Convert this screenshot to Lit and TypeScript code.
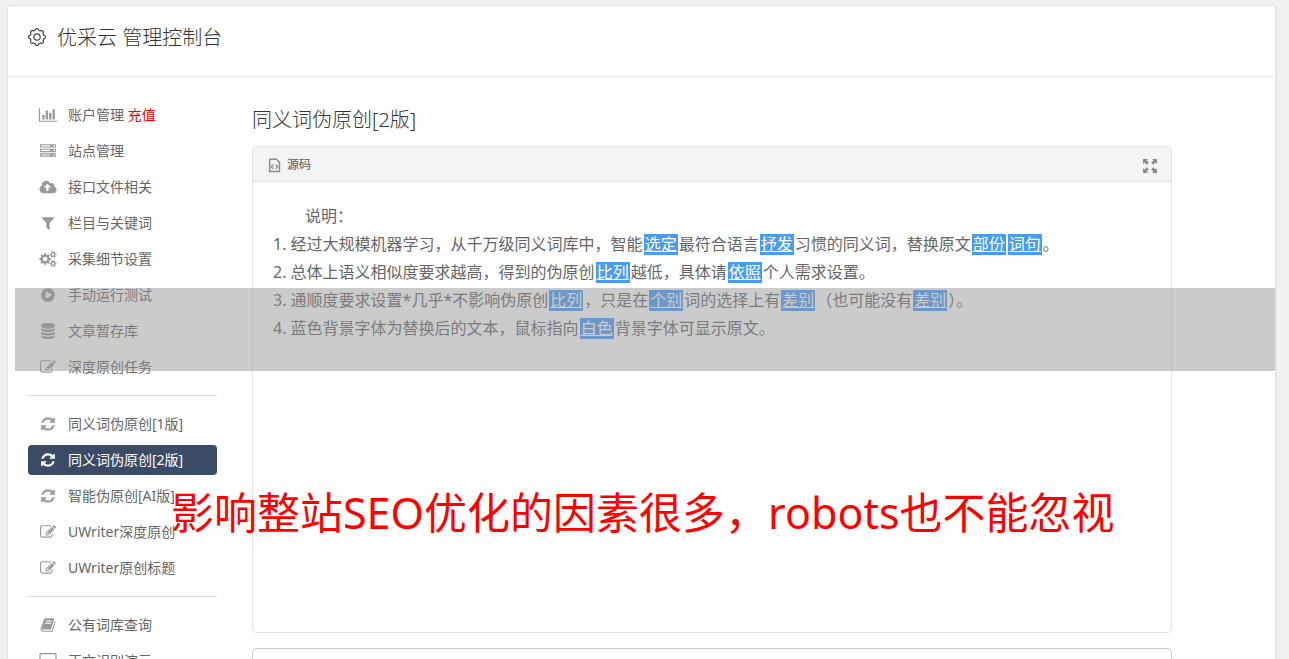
import { LitElement, html, css, svg, nothing } from "lit";
import { customElement, property } from "lit/decorators.js";
import { classMap } from "lit/directives/class-map.js";

interface Glyph {
  w: number;
  d: string;
}

const GLYPHS: Record<string, Glyph> = {
  chart: {
    w: 2048,
    d: "M640 896v512h-256v-512h256zm384-512v1024h-256v-1024h256zm1024 1152v128h-2048v-1536h128v1408h1920zm-640-896v768h-256v-768h256zm384-384v1152h-256v-1152h256z",
  },
  server: {
    w: 1792,
    d: "M128 1408h1024v-128h-1024v128zm0-512h1024v-128h-1024v128zm1568 448q0-40-28-68t-68-28-68 28-28 68 28 68 68 28 68-28 28-68zm-1568-960h1024v-128h-1024v128zm1568 448q0-40-28-68t-68-28-68 28-28 68 28 68 68 28 68-28 28-68zm0-512q0-40-28-68t-68-28-68 28-28 68 28 68 68 28 68-28 28-68zm96 832v384h-1792v-384h1792zm0-512v384h-1792v-384h1792zm0-512v384h-1792v-384h1792z",
  },
  upload: {
    w: 1920,
    d: "M1280 928q0-14-9-23l-352-352q-9-9-23-9t-23 9l-351 351q-10 12-10 24 0 14 9 23t23 9h224v352q0 13 9.5 22.5t22.5 9.5h192q13 0 22.5-9.5t9.5-22.5v-352h224q13 0 22.5-9.5t9.5-22.5zm640 288q0 159-112.5 271.5t-271.5 112.5h-1088q-185 0-316.5-131.5t-131.5-316.5q0-130 70-240t188-165q-2-30-2-43 0-212 150-362t362-150q156 0 285.5 87t188.5 231q71-62 166-62 106 0 181 75t75 181q0 76-41 138 130 31 213.5 135.5t83.5 238.5z",
  },
  filter: {
    w: 1792,
    d: "M1595 295q17 41-14 70l-493 493v742q0 42-39 59-13 5-25 5-27 0-45-19l-256-256q-19-19-19-45v-486l-493-493q-31-29-14-70 17-39 59-39h1280q42 0 59 39z",
  },
  cogs: {
    w: 1920,
    d: "M896 896q0-106-75-181t-181-75-181 75-75 181 75 181 181 75 181-75 75-181zm768 512q0-52-38-90t-90-38-90 38-38 90q0 53 37.5 90.5t90.5 37.5 90.5-37.5 37.5-90.5zm0-1024q0-52-38-90t-90-38-90 38-38 90q0 53 37.5 90.5t90.5 37.5 90.5-37.5 37.5-90.5zm-384 421v185q0 10-7 19.5t-16 10.5l-155 24q-11 35-32 76 34 48 90 115 7 11 7 20 0 12-7 19-23 30-82.5 89.5t-78.5 59.5q-11 0-21-7l-115-90q-37 19-77 31-11 108-23 155-7 24-30 24h-186q-11 0-20-7.5t-10-17.5l-23-153q-34-10-75-31l-118 89q-7 7-20 7-11 0-21-8-144-133-144-160 0-9 7-19 10-14 41-53t47-61q-23-44-35-82l-152-24q-10-1-17-9.5t-7-19.5v-185q0-10 7-19.5t16-10.5l155-24q11-35 32-76-34-48-90-115-7-11-7-20 0-12 7-20 22-30 82-89t79-59q11 0 21 7l115 90q34-18 77-32 11-108 23-154 7-24 30-24h186q11 0 20 7.5t10 17.5l23 153q34 10 75 31l118-89q8-7 20-7 11 0 21 8 144 133 144 160 0 8-7 19-12 16-42 54t-45 60q23 48 34 82l152 23q10 2 17 10.5t7 19.5zm640 533v140q0 16-149 31-12 27-30 52 51 113 51 138 0 4-4 7-122 71-124 71-8 0-46-47t-52-68q-20 2-30 2t-30-2q-14 21-52 68t-46 47q-2 0-124-71-4-3-4-7 0-25 51-138-18-25-30-52-149-15-149-31v-140q0-16 149-31 13-29 30-52-51-113-51-138 0-4 4-7 4-2 35-20t59-34 30-16q8 0 46 46.5t52 67.5q20-2 30-2t30 2q51-71 92-112l6-2q4 0 124 70 4 3 4 7 0 25-51 138 17 23 30 52 149 15 149 31zm0-1024v140q0 16-149 31-12 27-30 52 51 113 51 138 0 4-4 7-122 71-124 71-8 0-46-47t-52-68q-20 2-30 2t-30-2q-14 21-52 68t-46 47q-2 0-124-71-4-3-4-7 0-25 51-138-18-25-30-52-149-15-149-31v-140q0-16 149-31 13-29 30-52-51-113-51-138 0-4 4-7 4-2 35-20t59-34 30-16q8 0 46 46.5t52 67.5q20-2 30-2t30 2q51-71 92-112l6-2q4 0 124 70 4 3 4 7 0 25-51 138 17 23 30 52 149 15 149 31z",
  },
  play: {
    w: 1792,
    d: "M896 128q209 0 385.5 103t279.5 279.5 103 385.5-103 385.5-279.5 279.5-385.5 103-385.5-103-279.5-279.5-103-385.5 103-385.5 279.5-279.5 385.5-103zm384 823q32-18 32-55t-32-55l-544-320q-31-19-64-1-32 19-32 56v640q0 37 32 56 16 8 32 8 17 0 32-9z",
  },
  database: {
    w: 1792,
    d: "M896 768q237 0 443-43t325-127v170q0 69-103 128t-280 93.5-385 34.5-385-34.5-280-93.5-103-128v-170q119 84 325 127t443 43zm0 768q237 0 443-43t325-127v170q0 69-103 128t-280 93.5-385 34.5-385-34.5-280-93.5-103-128v-170q119 84 325 127t443 43zm0-384q237 0 443-43t325-127v170q0 69-103 128t-280 93.5-385 34.5-385-34.5-280-93.5-103-128v-170q119 84 325 127t443 43zm0-1152q208 0 385 34.5t280 93.5 103 128v128q0 69-103 128t-280 93.5-385 34.5-385-34.5-280-93.5-103-128v-128q0-69 103-128t280-93.5 385-34.5z",
  },
  edit: {
    w: 1792,
    d: "M888 1184l116-116-152-152-116 116v56h96v96h56zm440-720q-16-16-33 1l-350 350q-17 17-1 33t33-1l350-350q17-17 1-33zm80 594v190q0 119-84.5 203.5t-203.5 84.5h-832q-119 0-203.5-84.5t-84.5-203.5v-832q0-119 84.5-203.5t203.5-84.5h832q63 0 117 25 15 7 18 23 3 17-9 29l-49 49q-14 14-32 8-23-6-45-6h-832q-66 0-113 47t-47 113v832q0 66 47 113t113 47h832q66 0 113-47t47-113v-126q0-13 9-22l64-64q15-15 35-7t20 29zm-96-738l288 288-672 672h-288v-288zm444 132l-92 92-288-288 92-92q28-28 68-28t68 28l152 152q28 28 28 68t-28 68z",
  },
  refresh: {
    w: 1792,
    d: "M1639 1056q0 5-1 7-64 268-268 434.5t-478 166.5q-146 0-282.5-55t-243.5-157l-129 129q-19 19-45 19t-45-19-19-45v-448q0-26 19-45t45-19h448q26 0 45 19t19 45-19 45l-137 137q71 66 161 102t187 36q134 0 250-65t186-179q11-17 53-117 8-23 30-23h192q13 0 22.5 9.5t9.5 22.5zm25-800v448q0 26-19 45t-45 19h-448q-26 0-45-19t-19-45 19-45l138-138q-148-137-349-137-134 0-250 65t-186 179q-11 17-53 117-8 23-30 23h-199q-13 0-22.5-9.5t-9.5-22.5v-7q65-268 270-434.5t480-166.5q146 0 284 55.5t245 156.5l130-129q19-19 45-19t45 19 19 45z",
  },
  book: {
    w: 1792,
    d: "M1703 478q40 57 18 129l-275 906q-19 64-76.5 107.5t-122.5 43.5h-923q-77 0-148.5-53.5t-99.5-131.5q-24-67-2-127 0-4 3-27t4-37q1-8-3-21.5t-3-19.5q2-11 8-21t16.5-23.5 16.5-23.5q23-38 45-91.5t30-91.5q3-10 .5-30t-.5-28q3-11 17-28t17-23q21-36 42-92t25-90q1-9-2.5-32t.5-28q4-13 22-30.5t22-22.5q19-26 42.5-84.5t27.5-96.5q1-8-3-25.5t-2-26.5q2-8 9-18t18-23 17-21q8-12 16.5-30.5t15-35 16-36 19.5-32 26.5-23.5 36-11.5 47.5 5.5l-1 3q38-9 51-9h761q74 0 114 56t18 130l-274 906q-36 119-71.5 153.5t-128.5 34.5h-869q-27 0-38 15-11 16-1 43 24 70 144 70h923q29 0 56-15.5t35-41.5l300-987q7-22 5-57 38 15 59 43zm-1064 2q-4 13 2 22.5t20 9.5h608q13 0 25.5-9.5t16.5-22.5l21-64q4-13-2-22.5t-20-9.5h-608q-13 0-25.5 9.5t-16.5 22.5zm-83 256q-4 13 2 22.5t20 9.5h608q13 0 25.5-9.5t16.5-22.5l21-64q4-13-2-22.5t-20-9.5h-608q-13 0-25.5 9.5t-16.5 22.5z",
  },
  desktop: {
    w: 1920,
    d: "M1792 992v-832q0-13-9.500-22.500t-22.500-9.500h-1600q-13 0-22.500 9.500t-9.500 22.500v832q0 13 9.500 22.500t22.500 9.500h1600q13 0 22.500-9.500t9.500-22.500zm128-832v1088q0 66-47 113t-113 47h-544q0 37 16 77.500t32 71 16 43.500q0 26-19 45t-45 19h-512q-26 0-45-19t-19-45q0-14 16-44t32-70 16-78h-544q-66 0-113-47t-47-113v-1088q0-66 47-113t113-47h1600q66 0 113 47t47 113z",
  },
};

interface NavEntry {
  icon: string;
  label: string;
  extra?: string;
  active?: boolean;
}

const NAV: NavEntry[][] = [
  [
    { icon: "chart", label: "账户管理", extra: "充值" },
    { icon: "server", label: "站点管理" },
    { icon: "upload", label: "接口文件相关" },
    { icon: "filter", label: "栏目与关键词" },
    { icon: "cogs", label: "采集细节设置" },
    { icon: "play", label: "手动运行测试" },
    { icon: "database", label: "文章暂存库" },
    { icon: "edit", label: "深度原创任务" },
  ],
  [
    { icon: "refresh", label: "同义词伪原创[1版]" },
    { icon: "refresh", label: "同义词伪原创[2版]", active: true },
    { icon: "refresh", label: "智能伪原创[AI版]" },
    { icon: "edit", label: "UWriter深度原创" },
    { icon: "edit", label: "UWriter原创标题" },
  ],
  [
    { icon: "book", label: "公有词库查询" },
    { icon: "desktop", label: "正文识别演示" },
  ],
];

// Odd entries of each line are the replaced words.
const NOTES: string[][] = [
  ["经过大规模机器学习，从千万级同义词库中，智能", "选定", "最符合语言", "抒发", "习惯的同义词，替换原文", "部份", "", "词句", "。"],
  ["总体上语义相似度要求越高，得到的伪原创", "比列", "越低，具体请", "依照", "个人需求设置。"],
  ["通顺度要求设置*几乎*不影响伪原创", "比列", "，只是在", "个别", "词的选择上有", "差别", "（也可能没有", "差别", "）。"],
  ["蓝色背景字体为替换后的文本，鼠标指向", "白色", "背景字体可显示原文。"],
];

// Outline of a gear with rounded teeth, centred on 9,9.
function gearPath(): string {
  const points: string[] = [];
  const steps = 96;
  for (let i = 0; i < steps; i++) {
    const a = (i / steps) * Math.PI * 2;
    const wave = Math.cos(a * 8);
    const r = 7.6 + 0.8 * Math.sign(wave) * Math.pow(Math.abs(wave), 0.6);
    points.push(`${(9 + r * Math.sin(a)).toFixed(2)} ${(9 - r * Math.cos(a)).toFixed(2)}`);
  }
  return `M${points.join("L")}Z`;
}

@customElement("side-nav")
class SideNav extends LitElement {
  @property({ attribute: false }) groups: NavEntry[][] = [];

  static styles = css`
    :host {
      display: block;
    }
    .group {
      list-style: none;
      margin: 0;
      padding: 0;
      display: flex;
      flex-direction: column;
      gap: 6px;
    }
    .rule {
      border: 0;
      border-top: 1px solid #dcdcdc;
      margin: 13px 0;
    }
    .link {
      display: flex;
      align-items: center;
      gap: 10px;
      height: 30px;
      padding: 0 10px;
      border-radius: 4px;
      color: #666;
      font-size: 14px;
      line-height: 20px;
      font-weight: 400;
      text-decoration: none;
      white-space: nowrap;
    }
    .active {
      background: #3b4b66;
      color: #fff;
    }
    .icon {
      flex: none;
      width: 20px;
      height: 16px;
      fill: #999;
    }
    .active .icon {
      fill: #fff;
    }
    .extra {
      color: #f00;
    }
  `;

  render() {
    return html`<nav>
      ${this.groups.map(
        (group, i) => html`
          ${i ? html`<hr class="rule" />` : nothing}
          <ul class="group">
            ${group.map((entry) => this.entry(entry))}
          </ul>
        `
      )}
    </nav>`;
  }

  private entry(e: NavEntry) {
    const g = GLYPHS[e.icon];
    return html`<li>
      <a class=${classMap({ link: true, active: !!e.active })} href="#">
        <svg class="icon" viewBox="0 0 ${g.w} 1792" aria-hidden="true">${svg`<path d=${g.d} />`}</svg>
        <span>${e.label}${e.extra ? html` <span class="extra">${e.extra}</span>` : nothing}</span>
      </a>
    </li>`;
  }
}

@customElement("rich-editor")
class RichEditor extends LitElement {
  static styles = css`
    :host {
      display: block;
    }
    .frame {
      display: flex;
      flex-direction: column;
      min-height: 485px;
      border: 1px solid #e2e2e2;
      border-radius: 4px;
      overflow: hidden;
    }
    .bar {
      display: flex;
      align-items: center;
      justify-content: space-between;
      height: 34px;
      padding: 0 14px 0 15px;
      background: #f4f4f4;
      border-bottom: 1px solid #e2e2e2;
    }
    .tool {
      display: flex;
      align-items: center;
      gap: 6px;
      border: 0;
      padding: 0;
      background: none;
      font: inherit;
      font-size: 12px;
      font-weight: 400;
      color: #555;
    }
    .tool svg {
      display: block;
      margin-top: 3px;
    }
    .text {
      padding: 20px;
      font-size: 16px;
      line-height: 28px;
      font-weight: 400;
      color: #666;
    }
    .lead {
      margin: 0;
      text-indent: 2em;
    }
    .notes {
      margin: 0;
      padding: 0;
      list-style: decimal inside;
    }
    .word {
      display: inline-block;
      margin: 0 1px;
      padding: 0 1px;
      line-height: 21px;
      background: #4a9bf5;
      color: #fff;
      text-decoration: underline;
    }
  `;

  render() {
    return html`<div class="frame">
      <div class="bar">
        <button class="tool" type="button">
          <svg width="13" height="15" viewBox="0 0 13 15" fill="none" stroke="#8a8a8a" aria-hidden="true">
            <path stroke-width="1.400" d="M1.700 1.200h6.800l3 3v9.300h-9.800z" />
            <path stroke-width="1.300" d="M5.500 6.500l-2.200 2.200 2.200 2.200M7.700 6.500l2.200 2.200-2.200 2.200" />
          </svg>
          <span>源码</span>
        </button>
        <button class="tool" type="button" aria-label="全屏">
          <svg width="14" height="14" viewBox="0 0 14 14" fill="#8a8a8a" aria-hidden="true">
            <path
              d="M0 0h5L3.500 1.500l2.300 2.300-2 2L1.500 3.500 0 5zM14 0v5l-1.500-1.500-2.300 2.300-2-2 2.300-2.300L9 0zM0 14V9l1.500 1.500 2.300-2.300 2 2-2.300 2.300L5 14zM14 14H9l1.500-1.500-2.300-2.300 2-2 2.300 2.300L14 9z"
            />
          </svg>
        </button>
      </div>
      <div class="text">
        <p class="lead">说明：</p>
        <ol class="notes">
          ${NOTES.map(
            (parts) =>
              html`<li>${parts.map((p, i) => (i % 2 ? html`<a class="word" href="#">${p}</a>` : p))}</li>`
          )}
        </ol>
      </div>
    </div>`;
  }
}

@customElement("app-root")
class AppRoot extends LitElement {
  static styles = css`
    :host {
      display: block;
      position: relative;
      box-sizing: border-box;
      height: 100vh;
      padding: 5px 12px 0 7px;
      overflow: hidden;
      background: #f1f1f1;
      color: #333;
      font-family: "Noto Sans", "Noto Sans CJK SC", sans-serif;
      font-weight: 300;
    }
    .panel {
      min-height: 100vh;
      background: #fff;
      border: 1px solid #e4e4e4;
      border-right-width: 2px;
      border-radius: 4px 4px 0 0;
    }
    .head {
      display: flex;
      align-items: center;
      gap: 11px;
      padding: 18px 20px 24px;
      border-bottom: 1px solid #e4e4e4;
    }
    .gear {
      margin-bottom: 3px;
    }
    .title,
    .subtitle {
      margin: 0;
      font-size: 20px;
      line-height: 28px;
      font-weight: 300;
    }
    .cols {
      display: flex;
      gap: 35px;
      padding: 23px 103px 0 20px;
    }
    .side {
      flex: none;
      width: 189px;
    }
    .main {
      flex: 1;
      min-width: 0;
      display: flex;
      flex-direction: column;
      padding-top: 6px;
    }
    .subtitle {
      margin-bottom: 12px;
    }
    .result {
      box-sizing: border-box;
      width: 100%;
      height: 120px;
      margin-top: 15px;
      border: 1px solid #ccc;
      border-radius: 4px;
      resize: none;
      font: inherit;
    }
    .band {
      position: absolute;
      top: 288px;
      left: 15px;
      right: 14px;
      height: 83px;
      background: rgba(147, 147, 147, 0.48);
    }
    .caption {
      position: absolute;
      top: 483px;
      left: 171px;
      margin: 0;
      font-size: 43px;
      line-height: 60px;
      font-weight: 400;
      white-space: nowrap;
      color: #f00;
    }
  `;

  render() {
    return html`
      <div class="panel">
        <header class="head">
          <svg class="gear" width="18" height="18" viewBox="0 0 18 18" fill="none" stroke="#444" stroke-width="1.200" aria-hidden="true">
            <path d=${gearPath()} />
            <circle cx="9" cy="9" r="3.200" />
          </svg>
          <h1 class="title">优采云 管理控制台</h1>
        </header>
        <div class="cols">
          <side-nav class="side" .groups=${NAV}></side-nav>
          <main class="main">
            <h2 class="subtitle">同义词伪原创[2版]</h2>
            <rich-editor></rich-editor>
            <textarea class="result" aria-label="原文"></textarea>
          </main>
        </div>
      </div>
      <div class="band"></div>
      <p class="caption">影响整站SEO优化的因素很多，robots也不能忽视</p>
    `;
  }
}
